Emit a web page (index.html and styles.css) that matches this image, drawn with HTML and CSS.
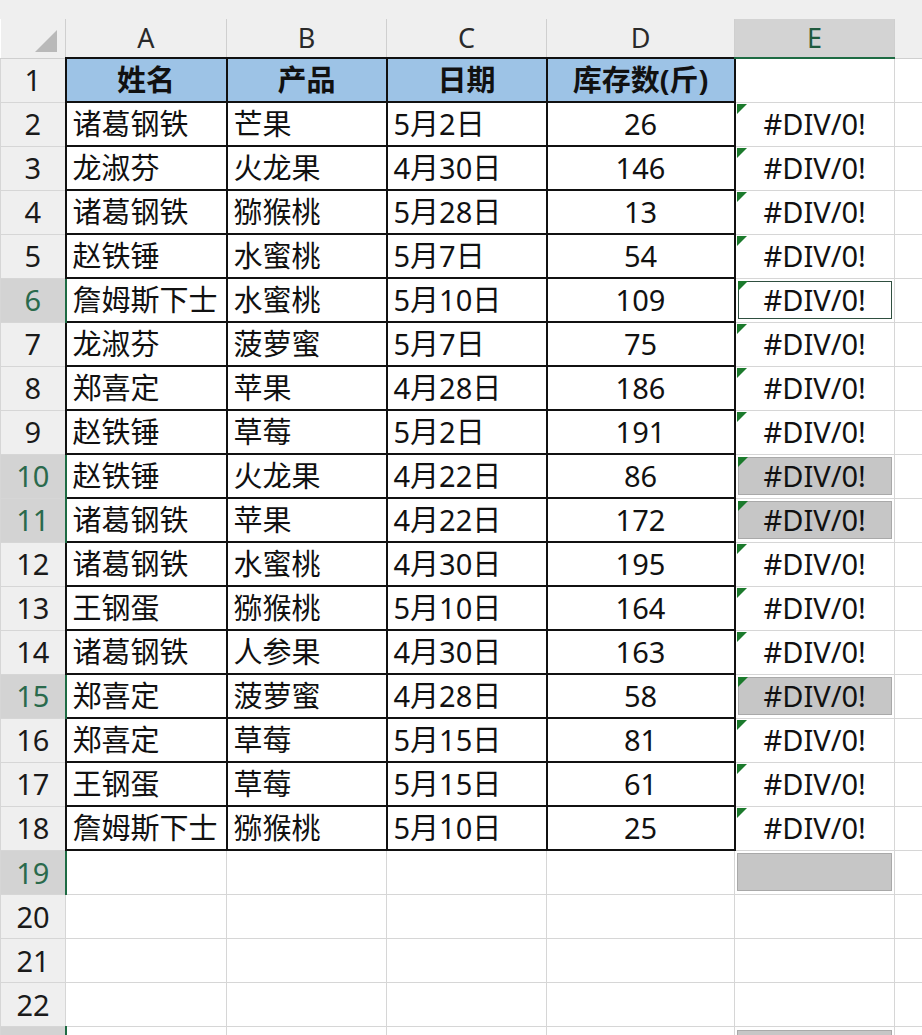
FILE: index.html
```html
<!DOCTYPE html>
<html lang="zh">
<head>
<meta charset="utf-8">
<title>Sheet</title>
<link rel="stylesheet" href="styles.css">
</head>
<body>
<div class="topstrip"></div>
<table class="sheet">
  <colgroup>
    <col class="c-rh"><col class="c-a"><col class="c-b"><col class="c-c"><col class="c-d"><col class="c-e"><col class="c-f">
  </colgroup>
  <tr class="colhdr">
    <th class="corner"><span class="tri"></span></th>
    <th>A</th><th>B</th><th>C</th><th>D</th><th class="csel">E</th><th></th>
  </tr>
  <tr>
    <th class="rh">1</th>
    <td class="d hd">姓名</td><td class="d hd">产品</td><td class="d hd">日期</td><td class="d hd">库存数(斤)</td><td class="e"></td><td></td>
  </tr>
  <tr><th class="rh">2</th><td class="d l">诸葛钢铁</td><td class="d l">芒果</td><td class="d l">5月2日</td><td class="d n">26</td><td class="e err"><span class="flag"></span>#DIV/0!</td><td></td></tr>
  <tr><th class="rh">3</th><td class="d l">龙淑芬</td><td class="d l">火龙果</td><td class="d l">4月30日</td><td class="d n">146</td><td class="e err"><span class="flag"></span>#DIV/0!</td><td></td></tr>
  <tr><th class="rh">4</th><td class="d l">诸葛钢铁</td><td class="d l">猕猴桃</td><td class="d l">5月28日</td><td class="d n">13</td><td class="e err"><span class="flag"></span>#DIV/0!</td><td></td></tr>
  <tr><th class="rh">5</th><td class="d l">赵铁锤</td><td class="d l">水蜜桃</td><td class="d l">5月7日</td><td class="d n">54</td><td class="e err"><span class="flag"></span>#DIV/0!</td><td></td></tr>
  <tr><th class="rh rsel">6</th><td class="d l">詹姆斯下士</td><td class="d l">水蜜桃</td><td class="d l">5月10日</td><td class="d n">109</td><td class="e err"><div class="box active"><span class="flag"></span>#DIV/0!</div></td><td></td></tr>
  <tr><th class="rh">7</th><td class="d l">龙淑芬</td><td class="d l">菠萝蜜</td><td class="d l">5月7日</td><td class="d n">75</td><td class="e err"><span class="flag"></span>#DIV/0!</td><td></td></tr>
  <tr><th class="rh">8</th><td class="d l">郑喜定</td><td class="d l">苹果</td><td class="d l">4月28日</td><td class="d n">186</td><td class="e err"><span class="flag"></span>#DIV/0!</td><td></td></tr>
  <tr><th class="rh">9</th><td class="d l">赵铁锤</td><td class="d l">草莓</td><td class="d l">5月2日</td><td class="d n">191</td><td class="e err"><span class="flag"></span>#DIV/0!</td><td></td></tr>
  <tr><th class="rh rsel">10</th><td class="d l">赵铁锤</td><td class="d l">火龙果</td><td class="d l">4月22日</td><td class="d n">86</td><td class="e err"><div class="box gray"><span class="flag"></span>#DIV/0!</div></td><td></td></tr>
  <tr><th class="rh rsel">11</th><td class="d l">诸葛钢铁</td><td class="d l">苹果</td><td class="d l">4月22日</td><td class="d n">172</td><td class="e err"><div class="box gray"><span class="flag"></span>#DIV/0!</div></td><td></td></tr>
  <tr><th class="rh">12</th><td class="d l">诸葛钢铁</td><td class="d l">水蜜桃</td><td class="d l">4月30日</td><td class="d n">195</td><td class="e err"><span class="flag"></span>#DIV/0!</td><td></td></tr>
  <tr><th class="rh">13</th><td class="d l">王钢蛋</td><td class="d l">猕猴桃</td><td class="d l">5月10日</td><td class="d n">164</td><td class="e err"><span class="flag"></span>#DIV/0!</td><td></td></tr>
  <tr><th class="rh">14</th><td class="d l">诸葛钢铁</td><td class="d l">人参果</td><td class="d l">4月30日</td><td class="d n">163</td><td class="e err"><span class="flag"></span>#DIV/0!</td><td></td></tr>
  <tr><th class="rh rsel">15</th><td class="d l">郑喜定</td><td class="d l">菠萝蜜</td><td class="d l">4月28日</td><td class="d n">58</td><td class="e err"><div class="box gray"><span class="flag"></span>#DIV/0!</div></td><td></td></tr>
  <tr><th class="rh">16</th><td class="d l">郑喜定</td><td class="d l">草莓</td><td class="d l">5月15日</td><td class="d n">81</td><td class="e err"><span class="flag"></span>#DIV/0!</td><td></td></tr>
  <tr><th class="rh">17</th><td class="d l">王钢蛋</td><td class="d l">草莓</td><td class="d l">5月15日</td><td class="d n">61</td><td class="e err"><span class="flag"></span>#DIV/0!</td><td></td></tr>
  <tr><th class="rh">18</th><td class="d l">詹姆斯下士</td><td class="d l">猕猴桃</td><td class="d l">5月10日</td><td class="d n">25</td><td class="e err"><span class="flag"></span>#DIV/0!</td><td></td></tr>
  <tr class="blank"><th class="rh rsel">19</th><td></td><td></td><td></td><td></td><td class="e"><div class="box gray"></div></td><td></td></tr>
  <tr class="blank"><th class="rh">20</th><td></td><td></td><td></td><td></td><td class="e"></td><td></td></tr>
  <tr class="blank"><th class="rh">21</th><td></td><td></td><td></td><td></td><td class="e"></td><td></td></tr>
  <tr class="blank"><th class="rh">22</th><td></td><td></td><td></td><td></td><td class="e"></td><td></td></tr>
  <tr class="blank"><th class="rh rsel"></th><td></td><td></td><td></td><td></td><td class="e"><div class="box gray"></div></td><td></td></tr>
</table>
</body>
</html>
```
FILE: styles.css
```css
html, body {
  margin: 0;
  padding: 0;
  background: #ffffff;
  overflow: hidden;
  height: 1035px;
}
body {
  font-family: "Noto Sans", "Noto Sans CJK SC", sans-serif;
  color: #111;
}
.topstrip {
  height: 19px;
  background: #efefef;
}
.sheet {
  border-collapse: collapse;
  table-layout: fixed;
  width: 933px;
}
.c-rh { width: 65px; }
.c-a { width: 161px; }
.c-b { width: 160px; }
.c-c { width: 160px; }
.c-d { width: 188px; }
.c-e { width: 160px; }
.c-f { width: 39px; }

.sheet th, .sheet td {
  border: 1px solid #d6d6d6;
  padding: 0;
  height: 42px;
  overflow: hidden;
  white-space: nowrap;
  font-size: 29px;
  line-height: 42px;
}
.sheet tr.blank th, .sheet tr.blank td {
  height: 43px;
  line-height: 43px;
}
.colhdr th {
  height: 38px;
  line-height: 36px;
  background: #efefef;
  font-weight: 400;
  color: #2a2a2a;
  font-size: 27px;
  border-top: none;
  border-color: #cfcfcf;
}
.colhdr th.corner {
  position: relative;
  border-left: none;
}
.tri {
  position: absolute;
  right: 8px;
  bottom: 6px;
  width: 0;
  height: 0;
  border-left: 22px solid transparent;
  border-bottom: 22px solid #b9b9b9;
}
.colhdr th.csel {
  background: #d3d3d3;
  color: #1f5a3e;
  border-bottom: 2px solid #1d6b43;
}
.rh {
  background: #efefef;
  font-weight: 400;
  color: #1a1a1a;
  font-size: 28px;
  text-align: center;
  border-left: none;
  border-color: #cfcfcf;
}
.rh.rsel {
  background: #d3d3d3;
  color: #2a6a4c;
  border-right: 2px solid #1d6b43;
}
.sheet td.d {
  border: 2px solid #111;
}
.sheet td.hd {
  background: #9dc3e6;
  font-weight: 700;
  text-align: center;
}
.sheet td.l {
  text-align: left;
  padding-left: 6px;
}
.sheet td.n {
  text-align: center;
}
.sheet td.e {
  position: relative;
  text-align: center;
  padding: 0 2px;
}
.flag {
  position: absolute;
  left: 1px;
  top: 1px;
  width: 0;
  height: 0;
  border-top: 10px solid #1b7a2c;
  border-right: 10px solid transparent;
}
.box {
  position: relative;
  height: 36px;
  line-height: 36px;
  text-align: center;
}
.box .flag {
  left: -1px;
  top: -1px;
}
.box.active {
  border: 1px solid #2f4f40;
  background: #fff;
}
.box.gray {
  background: #c6c6c6;
  border: 1px solid #a9a9a9;
}
```
